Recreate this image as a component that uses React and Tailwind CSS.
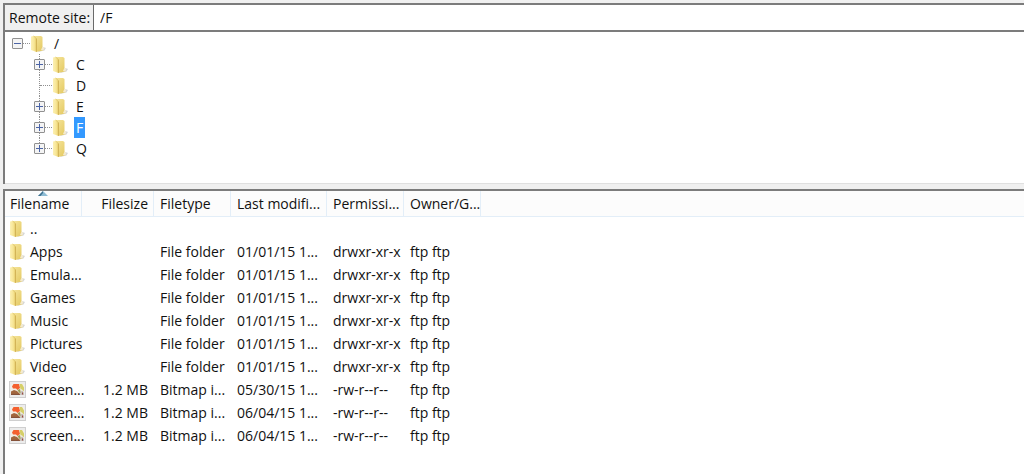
import { useState } from 'react';

const treeNodes = [
  { name: 'C', expandable: true },
  { name: 'D', expandable: false },
  { name: 'E', expandable: true },
  { name: 'F', expandable: true },
  { name: 'Q', expandable: true },
];

const columns = [
  { label: 'Filename', width: 'w-[77px]', pad: 'pl-[5px]', sorted: true },
  { label: 'Filesize', width: 'w-[72px]', pad: 'pr-[5px] text-right' },
  { label: 'Filetype', width: 'w-[77px]', pad: 'pl-[6px]' },
  { label: 'Last modifi...', width: 'w-[96px]', pad: 'pl-[6px]' },
  { label: 'Permissi...', width: 'w-[77px]', pad: 'pl-[6px]' },
  { label: 'Owner/G...', width: 'w-[77px]', pad: 'pl-[6px]' },
];

const folder = (name) => ({
  name,
  kind: 'folder',
  size: '',
  type: 'File folder',
  modified: '01/01/15 1...',
  permissions: 'drwxr-xr-x',
  owner: 'ftp ftp',
});

const bitmap = (modified) => ({
  name: 'screen...',
  kind: 'image',
  size: '1.2 MB',
  type: 'Bitmap i...',
  modified,
  permissions: '-rw-r--r--',
  owner: 'ftp ftp',
});

const files = [
  { name: '..', kind: 'folder' },
  folder('Apps'),
  folder('Emula...'),
  folder('Games'),
  folder('Music'),
  folder('Pictures'),
  folder('Video'),
  bitmap('05/30/15 1...'),
  bitmap('06/04/15 1...'),
  bitmap('06/04/15 1...'),
];

// Gradients shared by every folder icon
const IconDefs = () => (
  <svg className="absolute h-0 w-0" aria-hidden="true">
    <defs>
      <linearGradient id="folderFlap" x1="0" x2="1" y1="0" y2="0">
        <stop offset="0" stopColor="#fcf0b4" />
        <stop offset="0.6" stopColor="#f7e594" />
        <stop offset="1" stopColor="#e3c866" />
      </linearGradient>
      <linearGradient id="folderBody" x1="0" x2="1" y1="0" y2="1">
        <stop offset="0" stopColor="#f6e59c" />
        <stop offset="0.5" stopColor="#ecd67c" />
        <stop offset="1" stopColor="#e2c65c" />
      </linearGradient>
    </defs>
  </svg>
);

const FolderIcon = () => (
  <svg width="16" height="18" viewBox="0 0 16 18" className="shrink-0" aria-hidden="true">
    <path d="M8 17 L12 11.5 L16 13 L14.5 15.5 Z" fill="#bdbdbd" opacity="0.6" />
    <path d="M3.5 1 L11 1 L12.5 2 V13.5 L14 14 L13 15.5 L6 17 Z" fill="url(#folderBody)" />
    <path d="M12.5 11.5 L14 12.5 V14.5 L12.5 15.5 L11 15 Z" fill="#f3ead0" />
    <path d="M1 1.5 L3.5 1 L6.5 3.5 V17 L1 15 Z" fill="url(#folderFlap)" />
    <path d="M6.5 3.5 V16.8" stroke="#d3b457" strokeWidth="1" />
    <path d="M3.5 1 L6.5 3.5" stroke="#ddc56c" strokeWidth="0.8" />
  </svg>
);

const ImageIcon = () => (
  <svg width="17" height="17" viewBox="0 0 17 17" className="shrink-0" aria-hidden="true">
    <rect x="0.5" y="0.5" width="16" height="16" fill="#ececec" stroke="#cfcfcf" />
    <rect x="2" y="3" width="13" height="11" fill="#f4efe6" />
    <path d="M3 5.5 L4.5 3 H10 L11 7 L8.5 9 L7 7.5 H4 Z" fill="#f4602f" />
    <path d="M10.5 3 H13 L15 6.5 V10.5 L13 8.5 L11.5 8 Z" fill="#d5cf68" />
    <path d="M2 10.5 L5 9 L8 10 L11 13 V14 H2 Z" fill="#a2663e" />
    <path d="M2 12.8 H10.5 V14 H2 Z" fill="#85523a" />
    <path d="M8.5 9 L11 8 L12 12.5 L10 11.5 Z" fill="#9b9b52" />
    <path d="M12 10 L13.5 9.5 L15 12 V14 H11 Z" fill="#c8c0ba" />
    <path d="M13.5 11.5 V13.5" stroke="#9a4a42" strokeWidth="1" />
  </svg>
);

const Toggle = ({ open, label }) => (
  <button
    type="button"
    aria-label={label}
    aria-expanded={open}
    className="relative flex size-[11px] shrink-0 items-center justify-center rounded-[1px] border border-[#919191] bg-[#f4f4f4]"
  >
    <svg width="7" height="7" viewBox="0 0 7 7" stroke="#4b64a6" aria-hidden="true">
      <path d="M0 3.5 H7" />
      {!open && <path d="M3.5 0 V7" />}
    </svg>
  </button>
);

const RemoteTree = () => {
  const [selected, setSelected] = useState('F');

  return (
    <div className="h-[152px] border-b border-[#e0e0e0] bg-white pt-px pl-[7px]">
      <div className="flex h-[21px] items-center">
        <Toggle open label="Collapse /" />
        <span className="w-[7px] border-t border-dotted border-[#909090]" />
        <FolderIcon />
        <button type="button" className="ml-[6px] px-[2px] leading-[21px]">/</button>
      </div>
      <ul className="pl-[22px]">
        {treeNodes.map((node, i) => (
          <li key={node.name} className="relative flex h-[21px] items-center">
            <span
              className={`absolute top-0 left-[5px] border-l border-dotted border-[#909090] ${
                i === treeNodes.length - 1 ? 'h-1/2' : 'h-full'
              }`}
            />
            {node.expandable ? (
              <>
                <Toggle open={false} label={`Expand ${node.name}`} />
                <span className="w-[7px] border-t border-dotted border-[#909090]" />
              </>
            ) : (
              <span className="ml-[6px] w-[12px] border-t border-dotted border-[#909090]" />
            )}
            <FolderIcon />
            <button
              type="button"
              onClick={() => setSelected(node.name)}
              className={`ml-[6px] px-[2px] leading-[21px] ${
                selected === node.name ? 'bg-[#3399ff] text-white' : ''
              }`}
            >
              {node.name}
            </button>
          </li>
        ))}
      </ul>
    </div>
  );
};

const FileList = () => (
  <div className="grow bg-white">
    <table className="w-full table-fixed border-separate border-spacing-0 text-left whitespace-nowrap">
      <thead>
        <tr className="h-[26px] bg-[#fcfcfc]">
          {columns.map((col) => (
            <th
              key={col.label}
              scope="col"
              className={`relative border-r border-b border-[#e3eef8] p-0 font-normal ${col.width} ${col.pad}`}
            >
              {col.sorted && (
                <svg width="10" height="5" viewBox="0 0 10 5" className="absolute top-0 left-[33px]" aria-hidden="true">
                  <path d="M0 5 L5 0 L10 5 Z" fill="#8dbbd3" />
                  <path d="M0 5 L5 0 L5 2 L2.5 5 Z" fill="#3f718f" />
                </svg>
              )}
              <button type="button">{col.label}</button>
            </th>
          ))}
          <th className="border-b border-[#e3eef8] p-0" />
        </tr>
      </thead>
      <tbody>
        {files.map((file, i) => (
          <tr key={i} className="h-[23px]">
            <td className="p-0 pl-[4px]">
              <div className="flex h-[23px] items-center">
                <span className="flex w-[21px] shrink-0">
                  {file.kind === 'folder' ? <FolderIcon /> : <ImageIcon />}
                </span>
                {file.name}
              </div>
            </td>
            <td className="p-0 pr-[6px] text-right">{file.size}</td>
            <td className="p-0 pl-[6px]">{file.type}</td>
            <td className="p-0 pl-[6px]">{file.modified}</td>
            <td className="p-0 pl-[6px]">{file.permissions}</td>
            <td className="p-0 pl-[6px]">{file.owner}</td>
            <td className="p-0" />
          </tr>
        ))}
      </tbody>
    </table>
  </div>
);

export default function App() {
  return (
    <div className="flex min-h-screen flex-col overflow-hidden bg-[#f0f0f0] pt-[3px] pl-[3px] font-['Open_Sans','Noto_Sans',sans-serif] text-[14px] leading-[20px] text-[#111]">
      <IconDefs />
      <section className="border-t-2 border-l-2 border-[#7c7c7c]">
        <div className="flex h-[27px] border-b-2 border-[#7c7c7c]">
          <label
            htmlFor="remote-site"
            className="flex w-[89px] shrink-0 items-center border-r border-[#6a6a6a] bg-[#f0f0f0] pl-[4px] whitespace-nowrap"
          >
            Remote site:
          </label>
          <input
            id="remote-site"
            type="text"
            defaultValue="/F"
            className="min-w-0 grow bg-white pl-[6px] outline-none"
          />
        </div>
        <RemoteTree />
      </section>
      <section className="mt-[5px] flex grow flex-col border-t-2 border-l-2 border-[#7c7c7c]">
        <FileList />
      </section>
    </div>
  );
}
